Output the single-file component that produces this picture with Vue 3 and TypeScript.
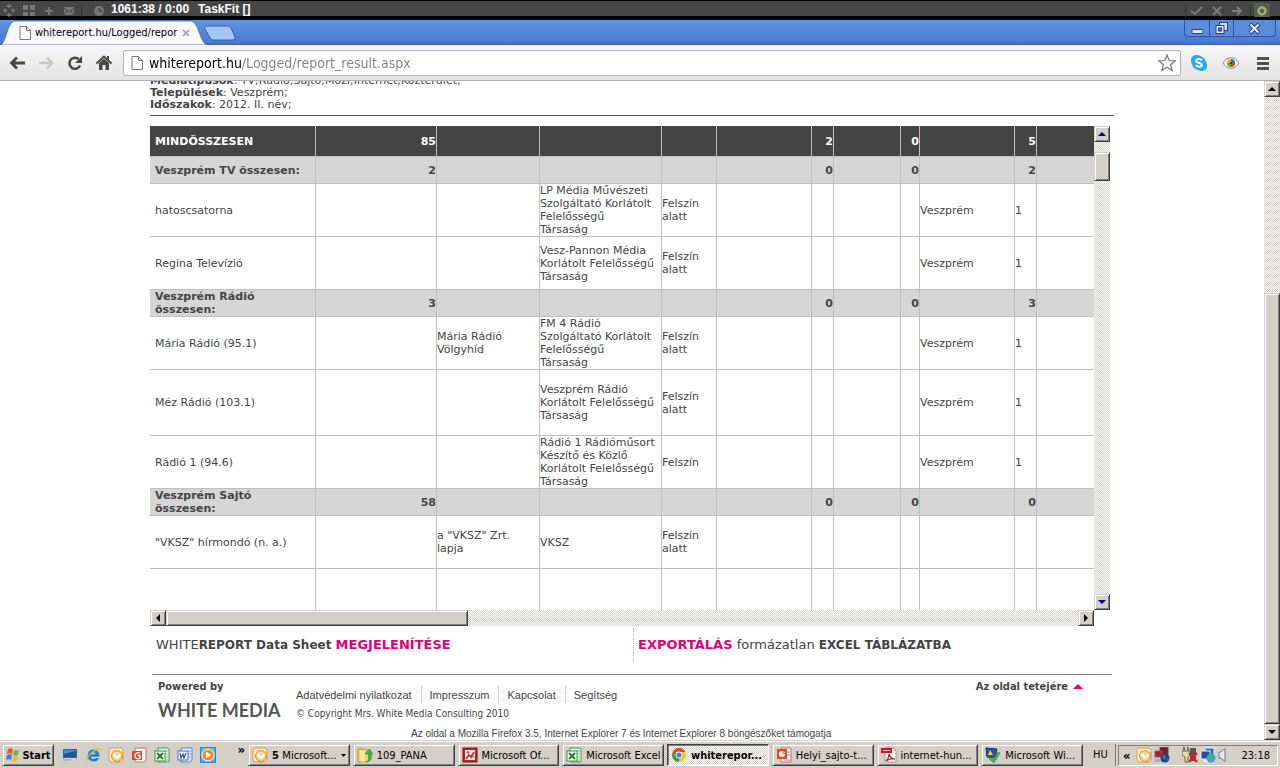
<script setup lang="ts">
import { ref } from 'vue'

type Cells = string[]
interface Row {
  kind: 'group' | 'item' | 'tall' | 'rest'
  cells: Cells
}
interface Task {
  icon: string
  label: string
  count?: string
  active?: boolean
  menu?: boolean
}

const address = ref('whitereport.hu/Logged/report_result.aspx')

const columns = [166, 121, 103, 122, 55, 95, 22, 67, 19, 95, 22, 120]

const group = (name: string, total: string, last: string): Row => ({
  kind: 'group',
  cells: [name, total, '', '', '', '', '0', '', '0', '', last, ''],
})
const item = (name: string, note: string, owner: string, status: string, city: string, n: string, kind: Row['kind'] = 'item'): Row => ({
  kind,
  cells: [name, '', note, owner, status, '', '', '', '', city, n, ''],
})

const header: Cells = ['MINDÖSSZESEN', '85', '', '', '', '', '2', '', '0', '', '5', '']
const rows: Row[] = [
  group('Veszprém TV összesen:', '2', '2'),
  item('hatoscsatorna', '', 'LP Média Művészeti\nSzolgáltató Korlátolt\nFelelősségű\nTársaság', 'Felszín\nalatt', 'Veszprém', '1'),
  item('Regina Televízió', '', 'Vesz-Pannon Média\nKorlátolt Felelősségű\nTársaság', 'Felszín\nalatt', 'Veszprém', '1'),
  group('Veszprém Rádió\nösszesen:', '3', '3'),
  item('Mária Rádió (95.1)', 'Mária Rádió\nVölgyhíd', 'FM 4 Rádió\nSzolgáltató Korlátolt\nFelelősségű\nTársaság', 'Felszín\nalatt', 'Veszprém', '1'),
  item('Méz Rádió (103.1)', '', 'Veszprém Rádió\nKorlátolt Felelősségű\nTársaság', 'Felszín\nalatt', 'Veszprém', '1', 'tall'),
  item('Rádió 1 (94.6)', '', 'Rádió 1 Rádióműsort\nKészítő és Közlő\nKorlátolt Felelősségű\nTársaság', 'Felszín', 'Veszprém', '1'),
  group('Veszprém Sajtó\nösszesen:', '58', '0'),
  item('"VKSZ" hírmondó (n. a.)', 'a "VKSZ" Zrt.\nlapja', 'VKSZ', 'Felszín\nalatt', '', ''),
  item('', '', '', '', '', '', 'rest'),
]

const numeric = new Set([1, 6, 8, 10])
const isNumeric = (row: Row, i: number) => row.kind === 'group' && numeric.has(i)

const quick = [
  { icon: 'desktop', label: 'Desktop' },
  { icon: 'ie', label: 'Internet Explorer' },
  { icon: 'outlook', label: 'Outlook' },
  { icon: 'ppt', label: 'PowerPoint' },
  { icon: 'excel', label: 'Excel' },
  { icon: 'word', label: 'Word' },
  { icon: 'player', label: 'Media Player' },
]
const tasks: Task[] = [
  { icon: 'outlook', label: 'Microsoft...', count: '5', menu: true },
  { icon: 'folder', label: '109_PANA' },
  { icon: 'picman', label: 'Microsoft Of...' },
  { icon: 'excel', label: 'Microsoft Excel' },
  { icon: 'chrome', label: 'whiterepor...', active: true },
  { icon: 'pptdoc', label: 'Helyi_sajto-t...' },
  { icon: 'pdf', label: 'internet-hun...' },
  { icon: 'winshield', label: 'Microsoft Wi...' },
]
const footerLinks = ['Adatvédelmi nyilatkozat', 'Impresszum', 'Kapcsolat', 'Segítség']
</script>

<template>
  <div class="screen">
    <svg class="defs" aria-hidden="true">
      <symbol id="desktop" viewBox="0 0 16 16">
        <path d="M1 2h14v9H1z" fill="#2f5fae" /><path d="M2 3h12v7H2z" fill="#4a8ad4" /><path d="M2 7l12-3v6H2z" fill="#22509c" />
        <path d="M1 12h14v2H1z" fill="#aab4c4" /><path d="M9 13h5" stroke="#f4f4f4" fill="none" />
      </symbol>
      <symbol id="ie" viewBox="0 0 16 16">
        <path d="M8.500 2.500a6 6 0 1 0 5.600 8.500h-3.600c-1.500 1.800-4.300 1-4.500-1.300h8.400C15 5.500 12 2.500 8.500 2.500zM6 7.300C6.500 4.800 10.300 4.800 10.800 7.300z" fill="#1e84d8" />
        <path d="M1.500 14.500C-.5 12 7 2 14 1c2 0 1.500 2.500.5 4 .3-2-.3-2.800-1.500-2.500C9 3.500 2 10.500 2.500 13z" fill="#f2b51d" />
      </symbol>
      <symbol id="outlook" viewBox="0 0 16 16">
        <path d="M3 1h10l2 2v10l-2 2H3l-2-2V3z" fill="#fdf1d6" stroke="#dd9a3c" />
        <circle cx="9" cy="9" r="5.500" fill="#f8d08c" stroke="#d98a22" /><path d="M5.500 7l3.500 4 3.500-4" fill="none" stroke="#fff" stroke-width="2" />
        <path d="M3 4h8" stroke="#e9b76c" />
      </symbol>
      <symbol id="ppt" viewBox="0 0 16 16">
        <path d="M4 1h11v12l-2 2H4z" fill="#fff" stroke="#d8694c" /><rect x="1" y="4" width="10" height="9" fill="#d84a2c" />
        <path d="M9 6.500A3 3 0 1 0 9 11V8.500H6.500" fill="none" stroke="#fff" stroke-width="1.300" />
      </symbol>
      <symbol id="pptdoc" viewBox="0 0 16 16">
        <path d="M5 1h10v14H5z" fill="#fff" stroke="#d8694c" /><path d="M11 5h3M11 8h3M7 13h7" stroke="#7a8ec4" /><rect x="1" y="2" width="10" height="10" fill="#dc4a26" />
        <circle cx="6" cy="7" r="3" fill="#fff" /><path d="M6 7V4a3 3 0 0 1 3 3z" fill="#f0a080" />
      </symbol>
      <symbol id="excel" viewBox="0 0 16 16">
        <path d="M4 1h10l1 1v13H4z" fill="#eef7ea" stroke="#4f9a4a" /><path d="M10 4h4M10 7h4M10 10h4M10 13h4" stroke="#83bb7d" />
        <rect x="1" y="4" width="10" height="10" fill="#fff" stroke="#3c8a3c" /><path d="M3 6l6 6M9 6l-6 6" stroke="#217a2e" stroke-width="2" />
      </symbol>
      <symbol id="word" viewBox="0 0 16 16">
        <path d="M4 1h11v12l-2 2H4z" fill="#e8effb" stroke="#5c7fc0" /><path d="M11 4h3M11 7h3M11 10h3" stroke="#88a2d4" />
        <rect x="1" y="4" width="10" height="9" fill="#fff" stroke="#4a6cb4" /><path d="M3 6l1 5 2-4 1 4 2-5" fill="none" stroke="#2b56a8" stroke-width="1.300" />
      </symbol>
      <symbol id="player" viewBox="0 0 16 16">
        <rect x="0.500" y="0.500" width="15" height="15" fill="#52b4f0" stroke="#2a86d0" /><circle cx="8" cy="8" r="6" fill="#f08a1c" stroke="#fff" /><path d="M6 4.500l5 3.500-5 3.500z" fill="#fff" />
      </symbol>
      <symbol id="folder" viewBox="0 0 16 16">
        <path d="M1 2h6l1 1h4v11l-4 1H1z" fill="#f3d36a" stroke="#c29a2c" /><path d="M3 4l5-1v12l-5-1z" fill="#fbe9a0" />
        <path d="M9 15c4-1 3-6 2-8H8l4.500-5L16 7h-2c1 4 0 8-5 8z" fill="#3fb53c" stroke="#238a28" stroke-width=".5" />
      </symbol>
      <symbol id="picman" viewBox="0 0 16 16">
        <rect x="1" y="1" width="14" height="14" fill="#b8242a" stroke="#7c1418" /><rect x="3" y="3" width="10" height="10" fill="#fbe6e2" />
        <path d="M4 12l3-4 2 2 3-5" stroke="#b8242a" stroke-width="1.500" fill="none" /><circle cx="6" cy="5.500" r="1.300" fill="#d84a4a" /><path d="M9 11l3-2" stroke="#b8242a" />
      </symbol>
      <symbol id="chrome" viewBox="0 0 16 16">
        <circle cx="8" cy="8" r="7" fill="#f6c42c" /><path d="M8 1a7 7 0 0 1 6.300 4H8L5 9 1.700 5A7 7 0 0 1 8 1z" fill="#dc4434" />
        <path d="M1.700 5L5.200 10l3.600 1L7.500 15A7 7 0 0 1 1.700 5z" fill="#36a04c" /><circle cx="8" cy="8" r="3.400" fill="#fff" /><circle cx="8" cy="8" r="2.600" fill="#4484e0" />
      </symbol>
      <symbol id="pdf" viewBox="0 0 16 16">
        <path d="M4 1h8l3 3v11H4z" fill="#fff" stroke="#999" /><rect x="0" y="1" width="11" height="5" fill="#c41e24" /><path d="M2 3.500h7" stroke="#f4b8b8" />
        <path d="M5 14c2-2 3-5 3-7 1 4 3 5 6 5-3-1-6 0-9 2z" fill="none" stroke="#c41e24" stroke-width="1.200" />
      </symbol>
      <symbol id="winshield" viewBox="0 0 16 16">
        <path d="M1 1l11 1-2 9-8-1z" fill="#2a52b4" stroke="#1a2c6c" /><path d="M5 3l3 5H3z" fill="#f6d222" />
        <path d="M5 10l3 3 5-8 2 1-6 10-5-4z" fill="#4cb83c" stroke="#2a7a24" stroke-width=".5" />
      </symbol>
      <symbol id="pcs" viewBox="0 0 16 16">
        <rect x="6" y="0" width="8" height="7" fill="#8c1420" stroke="#555" /><rect x="1" y="4" width="7" height="6" fill="#b81c28" stroke="#667" />
        <path d="M1 12h7l1 3H0z" fill="#a8b0c8" /><circle cx="11" cy="11" r="4.500" fill="#1c3c98" /><path d="M8 9l3-1 1 3-2 2zM13 12l2-1-2 4z" fill="#2c9a4c" />
      </symbol>
      <symbol id="plug" viewBox="0 0 16 16">
        <path d="M8 1h6v13H8z" fill="#555" /><path d="M2 0v4M6 0v4" stroke="#555" stroke-width="1.500" /><path d="M0 4h8v4L6 10v5H3v-5L0 8z" fill="#e8dca0" stroke="#665" />
        <path d="M7 6l8 9M15 6l-8 9" stroke="#dc1c1c" stroke-width="2.400" />
      </symbol>
      <symbol id="netglobe" viewBox="0 0 16 16">
        <rect x="5" y="1" width="9" height="8" fill="#2c68c0" stroke="#f0f4fa" /><rect x="1" y="4" width="9" height="8" fill="#1d4f9c" stroke="#f0f4fa" /><path d="M3 14h6" stroke="#eee" stroke-width="2" />
        <circle cx="11" cy="11" r="4.500" fill="#38a4dc" /><path d="M8 9l3-1 1 3-2 3zM13 10l2 1-2 3z" fill="#4cb848" />
      </symbol>
      <symbol id="flag" viewBox="0 0 16 16">
        <path d="M3 2c2-1 3-1 5 0L7 7C5 6 4 6 2 7z" fill="#e8582c" /><path d="M9 3c2 1 3 1 5 0l-1 5c-2 1-3 1-5 0z" fill="#6cb83c" />
        <path d="M2 8c2-1 3-1 5 0l-1 5c-2-1-3-1-5 0z" fill="#3c80dc" /><path d="M8 9c2 1 3 1 5 0l-1 5c-2 1-3 1-5 0z" fill="#f4bc24" />
      </symbol>
      <symbol id="page" viewBox="0 0 12 14">
        <path d="M1 .5h6.500l4 4v9H1z" fill="#fff" stroke="#777" /><path d="M7.500 .5v4h4" fill="none" stroke="#777" />
      </symbol>
    </svg>

    <header class="taskfit">
      <svg width="106" height="15" viewBox="0 0 106 15" aria-hidden="true">
        <path d="M6 4l3-2 3 2-3 2zM6 13l3 2 3-2-3-2zM5 6L3 8.500 5 11l2-2.500zM13 6l2 2.500-2 2.500-2-2.500z" fill="#777" />
        <path d="M23 3h5v5h-5zM30 3h5v5h-5zM23 10h5v4h-5zM30 10h5v4h-5zM48 5h2v3h3v2h-3v3h-2v-3h-3V8h3zM64 5h10v8H64z" fill="#777" />
        <path d="M64 6l5 4 5-4M64 13l3-4M74 13l-3-4" fill="none" stroke="#484848" />
        <path d="M81.500 3v12" stroke="#333" /><circle cx="99" cy="9" r="5" fill="#777" /><path d="M99 6v3h3" fill="none" stroke="#333" />
      </svg>
      <span class="tf-time">1061:38 / 0:00</span>
      <span class="tf-name">TaskFit []</span>
      <svg class="tf-right" width="96" height="15" viewBox="0 0 96 15" aria-hidden="true">
        <path d="M1.500 3v12M66.500 3v12" stroke="#333" /><rect x="70" y="1" width="16" height="14" fill="#56604a" />
        <g fill="none" stroke="#7c7c7c" stroke-width="2"><path d="M7 9l4 3 7-7M29 5l8 8M37 5l-8 8M48 9h9M53 5l4 4-4 4" /></g>
        <circle cx="78" cy="9" r="3.500" fill="none" stroke="#a0ac7c" stroke-width="2.500" />
      </svg>
    </header>

    <div class="tabstrip">
      <div class="tab">
        <svg class="tab-shape" viewBox="0 0 208 25" aria-hidden="true">
          <path d="M0 25C6 25 7 1 15 1H191C199 1 200 25 208 25z" fill="#f8f8f8" stroke="#3c64ac" stroke-width=".8" />
        </svg>
        <svg class="tab-icon" width="12" height="14"><use href="#page" /></svg>
        <span class="tab-title">whitereport.hu/Logged/repor</span>
        <button class="tab-close" aria-label="Close tab">
          <svg width="8" height="8" viewBox="0 0 8 8"><path d="M1 1l6 6M7 1L1 7" stroke="#999" stroke-width="1.500" /></svg>
        </button>
      </div>
      <button class="newtab" aria-label="New tab">
        <svg width="32" height="16" viewBox="0 0 32 16"><path d="M4 1h20q2 0 3 2l4 9q1 3-2 3H9q-2 0-3-2L1 4q-1-3 3-3z" fill="#a4c8f6" stroke="#2f5eb0" /></svg>
      </button>
      <div class="winbtns">
        <button class="wb" aria-label="Minimize"><svg width="13" height="14" viewBox="0 0 13 14"><rect x="1" y="8.500" width="11" height="4" rx="1" fill="#dfe9fb" stroke="#27417c" /></svg></button>
        <button class="wb" aria-label="Restore"><svg width="13" height="14" viewBox="0 0 13 14"><rect x="4.500" y="1.500" width="8" height="8" fill="#cfe0fa" stroke="#27417c" /><rect x="1" y="4.500" width="8" height="8" fill="#dfe9fb" stroke="#27417c" /><rect x="3.500" y="7" width="3" height="3" fill="#4a78cc" stroke="#27417c" /></svg></button>
        <button class="wb close" aria-label="Close"><svg width="13" height="14" viewBox="0 0 13 14"><path d="M2 3l9 9M11 3l-9 9" stroke="#27417c" stroke-width="4" /><path d="M2.500 3.500l8 8M10.500 3.500l-8 8" stroke="#e4edfc" stroke-width="2" /></svg></button>
      </div>
    </div>

    <nav class="toolbar">
      <button class="tb" aria-label="Back"><svg width="18" height="16" viewBox="0 0 18 16"><path d="M17 8H4M9 2.500L3.500 8 9 13.500" fill="none" stroke="#484848" stroke-width="2.800" /></svg></button>
      <button class="tb" aria-label="Forward"><svg width="18" height="16" viewBox="0 0 18 16"><path d="M2 8h12M10 2.500L15 8l-5 5.500" fill="none" stroke="#c8c8c8" stroke-width="2.500" /></svg></button>
      <button class="tb" aria-label="Reload"><svg width="18" height="16" viewBox="0 0 18 16"><path d="M14 10.500A5.500 5.500 0 1 1 12.500 4" fill="none" stroke="#484848" stroke-width="2.600" /><path d="M16 1v7H9z" fill="#484848" /></svg></button>
      <button class="tb" aria-label="Home"><svg width="18" height="16" viewBox="0 0 18 16"><path d="M1.500 8.500L9 1.500l7.500 7" fill="none" stroke="#484848" stroke-width="2" /><path d="M12 1h2v5h-2zM4 8l5-4.500L14 8v7h-3.500v-5h-3v5H4z" fill="#484848" /></svg></button>
      <div class="omnibox">
        <svg width="12" height="14"><use href="#page" /></svg>
        <input v-model="address" class="address" type="text" aria-label="Address" spellcheck="false" />
        <button class="tb star" aria-label="Bookmark"><svg width="18" height="18" viewBox="0 0 18 18"><path d="M9 1l2.200 5.500 6 .4-4.600 3.800 1.500 5.800L9 13.300l-5.100 3.200 1.500-5.800L.8 6.900l6-.4z" fill="#fff" stroke="#777" stroke-width="1.200" /></svg></button>
      </div>
      <button class="tb ext" aria-label="Skype"><svg width="16" height="16" viewBox="0 0 16 16"><rect width="11" height="11" rx="5" fill="#28aae4" /><rect x="5" y="5" width="11" height="11" rx="5" fill="#28aae4" /><circle cx="8" cy="8" r="7" fill="#28aae4" /><path d="M11 5.500C10 3.500 5.300 3.500 5.300 6c0 2.300 5.500 1.500 5.500 4 0 2.300-5 2.300-5.800 0" fill="none" stroke="#fff" stroke-width="2" /></svg></button>
      <button class="tb ext" aria-label="Eye"><svg width="16" height="16" viewBox="0 0 16 16"><path d="M0 8c4-7 12-7 16 0-4 7-12 7-16 0z" fill="#f4f4f4" stroke="#888" /><path d="M8 4a4 4 0 0 0-4 4h4z" fill="#f0b020" /><path d="M8 4a4 4 0 0 1 4 4H8z" fill="#3070d0" /><path d="M4 8a4 4 0 0 0 4 4V8z" fill="#50a840" /><path d="M12 8a4 4 0 0 1-4 4V8z" fill="#d84030" /><circle cx="8" cy="8" r="1" fill="#333" /></svg></button>
      <button class="tb ext" aria-label="Menu"><svg width="14" height="14" viewBox="0 0 14 14"><path d="M1 2.500h12M1 7.500h12M1 12.500h12" stroke="#505050" stroke-width="3" /></svg></button>
    </nav>

    <div class="viewport">
      <main class="page">
        <div class="content">
          <div class="filters">
            <p><b>Médiatípusok</b>: TV;Rádió;Sajtó;Mozi;Internet;Közterület;</p>
            <p><b>Települések</b>: Veszprém;</p>
            <p><b>Időszakok</b>: 2012. II. név;</p>
          </div>

          <section class="sheet">
            <div class="sheet-top">
              <div class="sheet-view">
                <table class="grid">
                  <colgroup>
                    <col v-for="(w, i) in columns" :key="i" :style="{ width: w + 'px' }" />
                  </colgroup>
                  <thead>
                    <tr class="head">
                      <th v-for="(c, i) in header" :key="i" scope="col" :class="{ num: numeric.has(i) }">{{ c }}</th>
                    </tr>
                  </thead>
                  <tbody>
                    <tr v-for="(row, r) in rows" :key="r" :class="row.kind">
                      <td v-for="(c, i) in row.cells" :key="i" :class="{ num: isNumeric(row, i) }">{{ c }}</td>
                    </tr>
                  </tbody>
                </table>
              </div>
              <div class="bar vbar blue">
                <button class="raised" aria-label="Scroll table up"><svg width="8" height="4" viewBox="0 0 8 4"><path d="M0 4l4-4 4 4z" /></svg></button>
                <div class="thumb raised sheet-vthumb"></div>
                <button class="raised last" aria-label="Scroll table down"><svg width="8" height="4" viewBox="0 0 8 4"><path d="M0 0h8L4 4z" /></svg></button>
              </div>
            </div>
            <div class="bar hbar">
              <button class="raised" aria-label="Scroll table left"><svg width="4" height="8" viewBox="0 0 4 8"><path d="M4 0v8L0 4z" /></svg></button>
              <div class="thumb raised sheet-hthumb"></div>
              <button class="raised last" aria-label="Scroll table right"><svg width="4" height="8" viewBox="0 0 4 8"><path d="M0 0v8l4-4z" /></svg></button>
            </div>
          </section>

          <div class="actions">
            <a href="#sheet">WHITE<b>REPORT Data Sheet <em>MEGJELENÍTÉSE</em></b></a>
            <a href="#export"><b><em>EXPORTÁLÁS</em></b> formázatlan <b>EXCEL TÁBLÁZATBA</b></a>
          </div>

          <footer class="footer">
            <div class="brand">
              <b>Powered by</b>
              <span class="logo">WHITE MEDIA</span>
            </div>
            <div class="legal">
              <nav class="links">
                <a v-for="l in footerLinks" :key="l" href="#info">{{ l }}</a>
              </nav>
              <p>© Copyright Mrs. White Media Consulting 2010</p>
            </div>
            <a class="totop" href="#top">Az oldal tetejére <svg width="10" height="5" viewBox="0 0 10 5"><path d="M0 5l5-5 5 5z" fill="#e2007a" /></svg></a>
          </footer>
          <p class="support">Az oldal a Mozilla Firefox 3.5, Internet Explorer 7 és Internet Explorer 8 böngészőket támogatja</p>
        </div>
      </main>
      <div class="bar vbar">
        <button class="raised" aria-label="Scroll page up"><svg width="8" height="4" viewBox="0 0 8 4"><path d="M0 4l4-4 4 4z" /></svg></button>
        <div class="thumb raised page-thumb"></div>
        <button class="raised" aria-label="Scroll page down"><svg width="8" height="4" viewBox="0 0 8 4"><path d="M0 0h8L4 4z" /></svg></button>
      </div>
    </div>

    <footer class="taskbar">
      <button class="raised start"><svg width="16" height="16"><use href="#flag" /></svg><b>Start</b></button>
      <div class="quick">
        <button v-for="q in quick" :key="q.icon" class="plain" :aria-label="q.label"><svg width="16" height="16"><use :href="'#' + q.icon" /></svg></button>
      </div>
      <span class="chev">»</span>
      <div class="tasks">
        <button v-for="t in tasks" :key="t.label" class="raised task" :class="{ active: t.active }">
          <svg width="16" height="16"><use :href="'#' + t.icon" /></svg>
          <span class="task-label"><b v-if="t.count">{{ t.count }}&nbsp;</b>{{ t.label }}</span>
          <svg v-if="t.menu" width="5" height="3" viewBox="0 0 5 3"><path d="M0 0h5L2.500 3z" /></svg>
        </button>
      </div>
      <span class="lang">HU</span>
      <div class="tray">
        <span class="tray-chev">«</span>
        <svg width="16" height="16"><use href="#outlook" /></svg>
        <svg width="16" height="16"><use href="#pcs" /></svg>
        <svg class="gap" width="16" height="16"><use href="#plug" /></svg>
        <svg width="16" height="16"><use href="#netglobe" /></svg>
        <svg width="9" height="14" viewBox="0 0 9 14"><path d="M1 4h2l4-3.500v13L3 10H1z" fill="#e8ecf4" stroke="#6c7890" /></svg>
        <time class="clock">23:18</time>
      </div>
    </footer>
  </div>
</template>

<style>
html,
body {
  margin: 0;
  background: #fff;
}
</style>

<style scoped>
.screen {
  display: flex;
  flex-direction: column;
  height: 100vh;
  overflow: hidden;
  font-family: "DejaVu Sans", Verdana, sans-serif;
  font-size: 11px;
  color: #444;
}
.defs {
  position: absolute;
  width: 0;
  height: 0;
}
button {
  margin: 0;
  padding: 0;
  border: 0;
  background: none;
  color: #000;
  font: inherit;
  display: flex;
  align-items: center;
  justify-content: center;
}
p {
  margin: 0;
}
svg {
  flex: none;
  display: block;
}
.taskfit {
  display: flex;
  align-items: center;
  flex: none;
  height: 14px;
  padding-top: 1px;
  border-top: 1px solid #000;
  border-bottom: 4px solid #000;
  background: #464646;
  color: #fff;
  font: bold 12px "Liberation Sans", Arial, sans-serif;
  white-space: nowrap;
}
.tf-time {
  margin-left: 5px;
}
.tf-name {
  margin-left: 9px;
}
.tf-right {
  margin-left: auto;
}
.tabstrip {
  display: flex;
  flex: none;
  height: 25px;
  background: linear-gradient(#6495e2, #4a79d0 92%, #36599c);
}
.tab {
  position: relative;
  display: flex;
  align-items: center;
  box-sizing: border-box;
  width: 208px;
  padding: 0 14px 0 19px;
}
.tab-shape {
  position: absolute;
  inset: 0;
  width: 100%;
  height: 100%;
}
.tab-icon {
  position: relative;
}
.tab-title {
  position: relative;
  flex: 1;
  margin: 0 4px;
  overflow: hidden;
  white-space: nowrap;
  color: #000;
  font: 11px "DejaVu Sans Condensed", Tahoma, sans-serif;
}
.tab-close {
  position: relative;
  margin-right: 4px;
}
.newtab {
  height: 16px;
  margin: 5px 0 0 -4px;
}
.winbtns {
  display: flex;
  height: 16px;
  margin: 0 4px 0 auto;
  border: 1px solid #2f549c;
  border-top: 0;
  border-radius: 0 0 4px 4px;
  background: #5c8bdc;
}
.wb {
  width: 24px;
}
.wb + .wb {
  border-left: 1px solid #2f549c;
}
.wb.close {
  width: 42px;
}
.toolbar {
  display: flex;
  align-items: center;
  flex: none;
  height: 35px;
  padding: 0 9px 0 8px;
  background: linear-gradient(#f8f8f8, #e2e2e2);
  border-bottom: 1px solid #b2b2bc;
}
.tb {
  width: 18px;
  margin-right: 11px;
}
.omnibox {
  display: flex;
  align-items: center;
  flex: 1;
  height: 24px;
  margin-left: -1px;
  margin-right: 10px;
  padding: 0 4px 0 7px;
  border: 1px solid #b4b4b4;
  border-radius: 2px;
  background: #fff;
}
.address {
  flex: 1;
  min-width: 0;
  height: 22px;
  margin: 0 0 0 6px;
  padding: 0;
  border: 0;
  outline: 0;
  color: transparent;
  background: linear-gradient(to right, #000 92px, #808080 92px);
  -webkit-background-clip: text;
  background-clip: text;
  font: 14px "DejaVu Sans Condensed", Tahoma, sans-serif;
}
.star {
  margin: 0;
}
.ext {
  width: 16px;
  margin-right: 16px;
}
.ext:last-child {
  margin-right: 0;
}
.viewport {
  display: flex;
  flex: 1;
  min-height: 0;
}
.page {
  flex: 1;
  min-width: 0;
  overflow: hidden;
}
.content {
  max-width: 964px;
  margin: -6px auto 0;
}
.filters {
  padding-bottom: 4px;
  border-bottom: 1px solid #d01480;
  line-height: 12px;
}
.sheet {
  width: 960px;
  max-width: 100%;
  margin-top: 10px;
}
.sheet-top {
  display: flex;
  height: 484px;
}
.sheet-view {
  flex: 1;
  min-width: 0;
  overflow: hidden;
}
.grid {
  table-layout: fixed;
  width: 1007px;
  border-collapse: separate;
  border-spacing: 0;
  line-height: 13px;
}
th,
td {
  box-sizing: border-box;
  padding: 0;
  border: solid #bfbfbf;
  border-width: 0 1px 1px 0;
  text-align: left;
  vertical-align: middle;
  white-space: pre;
}
th:first-child,
td:first-child {
  padding-left: 5px;
}
th.num,
td.num {
  text-align: right;
}
.head th {
  height: 31px;
  background: #444;
  color: #fff;
}
.group td {
  height: 27px;
  background: #d6d6d6;
  font-weight: bold;
}
.item td {
  height: 53px;
}
.tall td {
  height: 66px;
}
.rest td {
  height: 53px;
}
.bar {
  display: flex;
  flex: none;
  background: repeating-conic-gradient(#d4d0c8 0 25%, #fff 0 50%) 0 0 / 2px 2px;
}
.vbar {
  flex-direction: column;
  width: 16px;
}
.hbar {
  height: 16px;
  margin-right: 16px;
}
.bar button {
  flex: none;
  width: 16px;
  height: 16px;
}
.bar .last {
  margin-left: auto;
}
.vbar .last {
  margin: auto 0 0;
}
.blue svg {
  fill: #000080;
}
.raised {
  box-sizing: border-box;
  background: #d4d0c8;
  border: 1px solid;
  border-color: #d4d0c8 #404040 #404040 #d4d0c8;
  box-shadow: inset 1px 1px #fff, inset -1px -1px #808080;
}
.sheet-vthumb {
  height: 29px;
  margin-top: 10px;
}
.sheet-hthumb {
  width: 302px;
}
.page-thumb {
  flex: 1;
  margin-top: 196px;
}
.actions {
  display: flex;
  margin-top: 2px;
  font-size: 13px;
  line-height: 33px;
  white-space: nowrap;
}
.actions a {
  box-sizing: border-box;
  padding-left: 4px;
  color: #444;
  text-decoration: none;
}
.actions a:first-child {
  width: 484px;
  padding-left: 6px;
  border-right: 1px dotted #aaa;
}
.actions b {
  font-size: 12px;
}
.actions em {
  color: #e2007a;
  font-size: 13px;
  font-style: normal;
}
.footer {
  display: flex;
  margin: 12px 2px 0;
  padding: 4px 0 0 6px;
  border-top: 1px solid #808080;
  height: 48px;
}
.brand {
  width: 138px;
  line-height: 16px;
  font-family: "DejaVu Sans Condensed", Tahoma, sans-serif;
}
.logo {
  display: block;
  margin-top: 3px;
  color: #555;
  font: bold 18px/24px Lato, sans-serif;
  white-space: nowrap;
}
.legal {
  padding-top: 8px;
  font: 11px/16px "Liberation Sans", Arial, sans-serif;
}
.links {
  display: flex;
}
.links a {
  margin-right: 8px;
  padding-right: 9px;
  border-right: 1px dotted #aaa;
  color: #444;
  text-decoration: none;
}
.links a:last-child {
  border: 0;
}
.legal p {
  margin-top: 3px;
  font-family: "DejaVu Sans Condensed", Tahoma, sans-serif;
  font-size: 10px;
}
.totop {
  display: flex;
  align-items: center;
  gap: 5px;
  height: 14px;
  margin: 0 29px 0 auto;
  color: #444;
  font: bold 11px "DejaVu Sans Condensed", Tahoma, sans-serif;
  text-decoration: none;
}
.support {
  margin-left: 261px;
  font: 10px/14px "Liberation Sans", Arial, sans-serif;
}
.taskbar {
  display: flex;
  align-items: center;
  flex: none;
  box-sizing: border-box;
  height: 28px;
  padding: 1px 2px 0;
  border-top: 1px solid #d4d0c8;
  background: #d4d0c8;
  box-shadow: inset 0 1px #fff;
  color: #000;
  font: 11px "DejaVu Sans Condensed", Tahoma, sans-serif;
}
.start {
  width: 52px;
  height: 22px;
  gap: 1px;
}
.quick {
  display: flex;
  gap: 7px;
  margin-left: 8px;
}
.chev {
  align-self: flex-start;
  width: 29px;
  text-align: right;
  font-size: 13px;
  font-weight: bold;
}
.tasks {
  display: flex;
  flex: 1;
  gap: 3px;
  min-width: 0;
  margin: 0 10px 0 3px;
}
.task {
  flex: 1 1 0;
  min-width: 0;
  height: 22px;
  padding: 0 3px;
  gap: 4px;
  justify-content: flex-start;
}
.task-label {
  flex: 1;
  overflow: hidden;
  white-space: nowrap;
  text-align: left;
}
.task.active {
  border-color: #404040 #fff #fff #404040;
  box-shadow: inset 1px 1px #808080;
  background: repeating-conic-gradient(#d4d0c8 0 25%, #fff 0 50%) 0 0 / 2px 2px;
  font-weight: bold;
}
.lang {
  width: 22px;
  border-right: 1px solid #808080;
  line-height: 22px;
}
.tray {
  display: flex;
  align-items: center;
  box-sizing: border-box;
  width: 160px;
  height: 21px;
  margin-left: 2px;
  padding: 0 7px 0 4px;
  border: 1px solid;
  border-color: #808080 #fff #fff #808080;
  gap: 2px;
}
.tray-chev {
  width: 11px;
  font-weight: bold;
  font-size: 13px;
}
.gap {
  margin-left: 10px;
}
.clock {
  margin-left: auto;
}
</style>
